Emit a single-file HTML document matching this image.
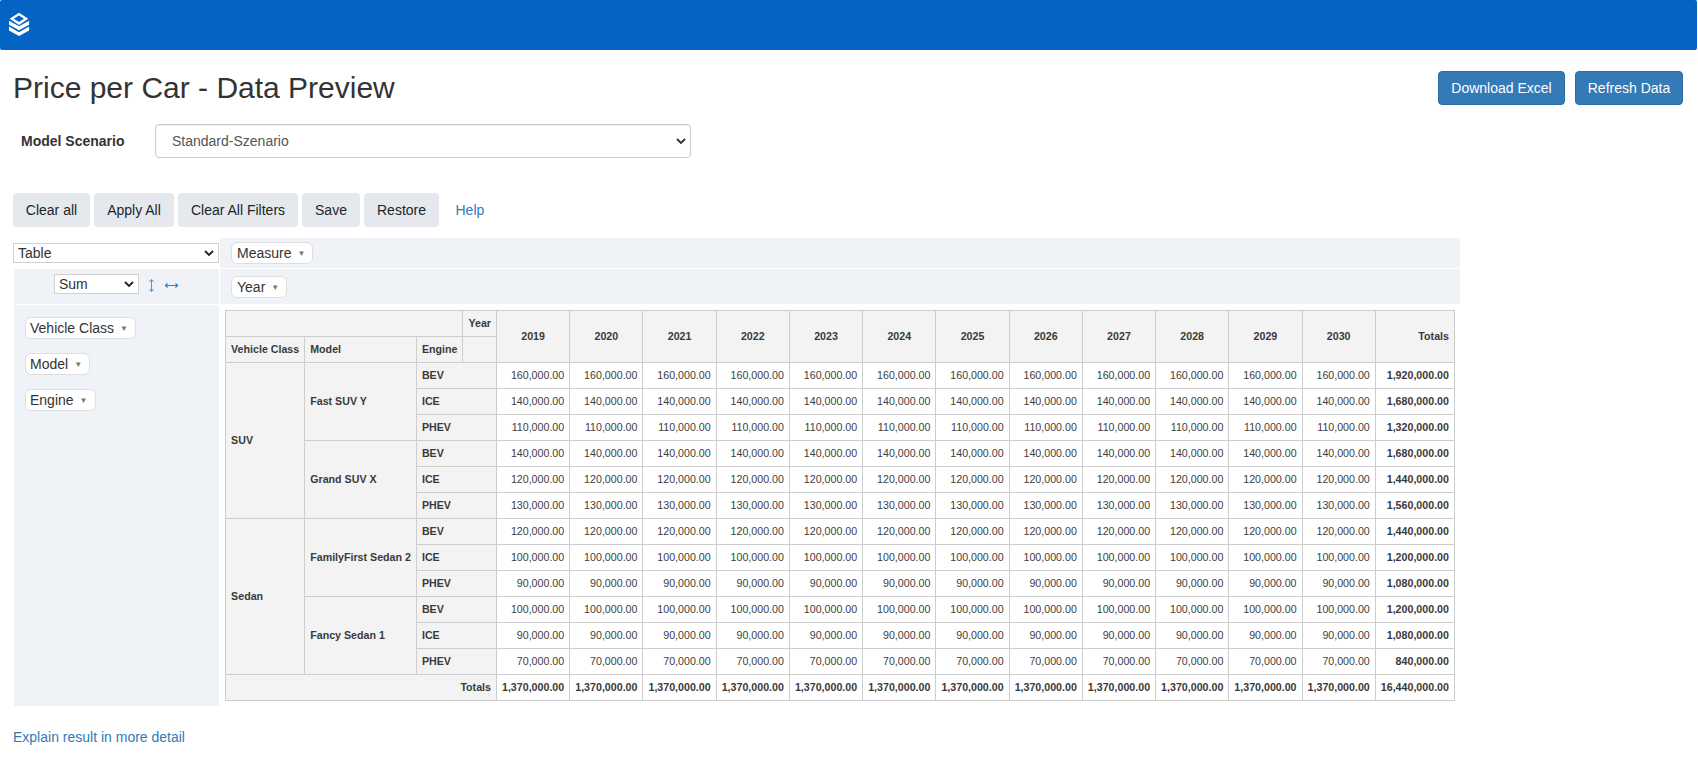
<!DOCTYPE html>
<html><head><meta charset="utf-8"><title>Price per Car - Data Preview</title>
<style>
html,body{margin:0;padding:0;background:#fff;}
body{width:1698px;height:766px;overflow:hidden;position:relative;font-family:"Liberation Sans",sans-serif;font-size:14px;color:#333;}
*{box-sizing:border-box;}
.abs{position:absolute;}
#hdr{position:absolute;left:0;top:0;width:1697px;height:50px;background:#0464c4;border-radius:2px;}
#logo{position:absolute;left:0;top:0;}
#title{position:absolute;left:13px;top:71px;font-size:30px;line-height:34px;font-weight:normal;color:#333;margin:0;white-space:nowrap;}
.btnp{position:absolute;top:71px;height:34px;background:#337ab7;border:1px solid #2e6da4;border-radius:4px;color:#fff;font-size:14px;line-height:20px;padding:6px 0;text-align:center;white-space:nowrap;}
#lbl{position:absolute;left:21px;top:131px;font-weight:bold;font-size:14px;line-height:20px;white-space:nowrap;}
#scen{position:absolute;left:155px;top:124px;width:536px;height:34px;border:1px solid #ccc;border-radius:4px;background:#fff;color:#555;font-size:14px;line-height:20px;padding:6px 16px;box-shadow:inset 0 1px 1px rgba(0,0,0,.075);}
.chev{position:absolute;}
.btng{position:absolute;top:193px;height:34px;background:#e5e9ee;border-radius:4px;color:#212529;font-size:14px;line-height:20px;padding:7px 0;text-align:center;white-space:nowrap;}
#help{position:absolute;left:455.5px;top:200px;color:#337ab7;font-size:14px;line-height:20px;}
.band{position:absolute;background:#eff2f7;}
.sel{position:absolute;background:#fff;border:1px solid #d0d0d0;color:#333;font-size:14px;white-space:nowrap;}
.pill{position:absolute;background:#fff;border:1px solid #dedede;border-radius:6px;color:#333;font-size:14px;line-height:20px;height:22px;padding:0 7px 0 4px;white-space:nowrap;}
.pill i{font-style:normal;font-size:8px;color:#777;margin-left:6px;position:relative;top:-2px;}
.arr{position:absolute;color:#337ab7;font-size:14px;line-height:20px;}
#out{position:absolute;left:225.1px;top:310px;}
table.pvt{border-collapse:collapse;font-size:10.67px;font-family:"Liberation Sans",sans-serif;color:#3a3a3a;}
table.pvt th{background:#f3f3f3;border:1px solid #cdcdcd;padding:5px;font-weight:bold;text-align:left;white-space:nowrap;height:26px;line-height:15px;}
table.pvt td{background:#fff;border:1px solid #cdcdcd;padding:5px;text-align:right;color:#3d3d3d;white-space:nowrap;height:26px;line-height:15px;vertical-align:top;}
table.pvt th.cl{text-align:center;}
table.pvt th.tl{text-align:right;}
table.pvt td.tot{font-weight:bold;color:#3a3a3a;}
#expl{position:absolute;left:13px;top:727px;color:#337ab7;font-size:14px;line-height:20px;white-space:nowrap;}

</style></head>
<body>
<div id="hdr">
<svg id="logo" width="40" height="50" viewBox="0 0 40 50"><path fill="#fff" fill-rule="evenodd" d="M19 12.7 L28.3 18.85 L19 25 L9.7 18.85 Z M18.9 15.6 L24 18.87 L18.9 22.1 L13.7 18.87 Z"/><path fill="#fff" d="M9 20.75 L19.05 26.3 L29.1 20.75 L29.1 24.7 L19.05 30.2 L9 24.7 Z"/><path fill="#fff" d="M9 26.6 L19.05 32.15 L29.1 26.6 L29.1 30.5 L19.05 36.05 L9 30.5 Z"/></svg>
</div>
<h2 id="title">Price per Car - Data Preview</h2>
<div class="btnp" style="left:1438px;width:127px;">Download Excel</div>
<div class="btnp" style="left:1575px;width:108px;">Refresh Data</div>
<div id="lbl">Model Scenario</div>
<div id="scen">Standard-Szenario<svg class="chev" style="right:4px;top:11px" width="10" height="10" viewBox="0 0 10 10"><path d="M1 3 L5 7 L9 3" fill="none" stroke="#333" stroke-width="1.8"/></svg></div>
<div class="btng" style="left:13px;width:77px;">Clear all</div>
<div class="btng" style="left:94px;width:80px;">Apply All</div>
<div class="btng" style="left:178px;width:120px;">Clear All Filters</div>
<div class="btng" style="left:302px;width:58px;">Save</div>
<div class="btng" style="left:364px;width:75px;">Restore</div>
<div id="help">Help</div>
<div class="band" style="left:220px;top:238px;width:1240px;height:30px;"></div>
<div class="band" style="left:220px;top:269px;width:1240px;height:35px;"></div>
<div class="band" style="left:14px;top:269px;width:205px;height:35px;"></div>
<div class="band" style="left:14px;top:305px;width:205px;height:401px;"></div>
<div class="sel" style="left:13px;top:243px;width:206px;height:20px;line-height:18px;padding-left:4px;">Table<svg class="chev" style="right:4px;top:4px" width="10" height="10" viewBox="0 0 10 10"><path d="M1 3 L5 7 L9 3" fill="none" stroke="#222" stroke-width="1.8"/></svg></div>
<div class="sel" style="left:54px;top:274px;width:85px;height:20px;line-height:18px;padding-left:4px;">Sum<svg class="chev" style="right:4px;top:4px" width="10" height="10" viewBox="0 0 10 10"><path d="M1 3 L5 7 L9 3" fill="none" stroke="#222" stroke-width="1.8"/></svg></div>
<svg class="abs" style="left:140px;top:270px" width="50" height="32" viewBox="140 270 50 32"><g fill="none" stroke="#4587c2" stroke-width="0.9"><path d="M151.5 279.6 V291.6 M149.3 282 L151.5 279.6 L153.7 282 M149.3 289.2 L151.5 291.6 L153.7 289.2"/></g><g fill="none" stroke="#337ab7" stroke-width="1.15"><path d="M165.4 285.5 H177.6 M167.6 283.4 L165.4 285.5 L167.6 287.6 M175.4 283.4 L177.6 285.5 L175.4 287.6"/></g></svg>
<div class="pill" style="left:231px;top:242px;padding-left:5px;">Measure<i>&#9660;</i></div>
<div class="pill" style="left:231px;top:276px;padding-left:5px;">Year<i>&#9660;</i></div>
<div class="pill" style="left:25px;top:317px;">Vehicle Class<i>&#9660;</i></div>
<div class="pill" style="left:25px;top:353px;">Model<i>&#9660;</i></div>
<div class="pill" style="left:25px;top:389px;">Engine<i>&#9660;</i></div>
<div id="out"><table class="pvt">
<colgroup><col class="c1"><col class="c2"><col class="c3"><col class="c4"><col class="cy"><col class="cy"><col class="cy"><col class="cy"><col class="cy"><col class="cy"><col class="cy"><col class="cy"><col class="cy"><col class="cy"><col class="cy"><col class="cy"><col class="ct"></colgroup>
<thead><tr class="h1"><th colspan="3" class="blank"></th><th class="axl">Year</th><th class="cl" rowspan="2">2019</th><th class="cl" rowspan="2">2020</th><th class="cl" rowspan="2">2021</th><th class="cl" rowspan="2">2022</th><th class="cl" rowspan="2">2023</th><th class="cl" rowspan="2">2024</th><th class="cl" rowspan="2">2025</th><th class="cl" rowspan="2">2026</th><th class="cl" rowspan="2">2027</th><th class="cl" rowspan="2">2028</th><th class="cl" rowspan="2">2029</th><th class="cl" rowspan="2">2030</th><th class="tl" rowspan="2">Totals</th></tr>
<tr class="h2"><th class="axl">Vehicle Class</th><th class="axl">Model</th><th class="axl">Engine</th><th class="blank"></th></tr></thead><tbody>
<tr><th class="rl" rowspan="6">SUV</th><th class="rl" rowspan="3">Fast SUV Y</th><th class="rl" colspan="2">BEV</th><td>160,000.00</td><td>160,000.00</td><td>160,000.00</td><td>160,000.00</td><td>160,000.00</td><td>160,000.00</td><td>160,000.00</td><td>160,000.00</td><td>160,000.00</td><td>160,000.00</td><td>160,000.00</td><td>160,000.00</td><td class="tot">1,920,000.00</td></tr>
<tr><th class="rl" colspan="2">ICE</th><td>140,000.00</td><td>140,000.00</td><td>140,000.00</td><td>140,000.00</td><td>140,000.00</td><td>140,000.00</td><td>140,000.00</td><td>140,000.00</td><td>140,000.00</td><td>140,000.00</td><td>140,000.00</td><td>140,000.00</td><td class="tot">1,680,000.00</td></tr>
<tr><th class="rl" colspan="2">PHEV</th><td>110,000.00</td><td>110,000.00</td><td>110,000.00</td><td>110,000.00</td><td>110,000.00</td><td>110,000.00</td><td>110,000.00</td><td>110,000.00</td><td>110,000.00</td><td>110,000.00</td><td>110,000.00</td><td>110,000.00</td><td class="tot">1,320,000.00</td></tr>
<tr><th class="rl" rowspan="3">Grand SUV X</th><th class="rl" colspan="2">BEV</th><td>140,000.00</td><td>140,000.00</td><td>140,000.00</td><td>140,000.00</td><td>140,000.00</td><td>140,000.00</td><td>140,000.00</td><td>140,000.00</td><td>140,000.00</td><td>140,000.00</td><td>140,000.00</td><td>140,000.00</td><td class="tot">1,680,000.00</td></tr>
<tr><th class="rl" colspan="2">ICE</th><td>120,000.00</td><td>120,000.00</td><td>120,000.00</td><td>120,000.00</td><td>120,000.00</td><td>120,000.00</td><td>120,000.00</td><td>120,000.00</td><td>120,000.00</td><td>120,000.00</td><td>120,000.00</td><td>120,000.00</td><td class="tot">1,440,000.00</td></tr>
<tr><th class="rl" colspan="2">PHEV</th><td>130,000.00</td><td>130,000.00</td><td>130,000.00</td><td>130,000.00</td><td>130,000.00</td><td>130,000.00</td><td>130,000.00</td><td>130,000.00</td><td>130,000.00</td><td>130,000.00</td><td>130,000.00</td><td>130,000.00</td><td class="tot">1,560,000.00</td></tr>
<tr><th class="rl" rowspan="6">Sedan</th><th class="rl" rowspan="3">FamilyFirst Sedan 2</th><th class="rl" colspan="2">BEV</th><td>120,000.00</td><td>120,000.00</td><td>120,000.00</td><td>120,000.00</td><td>120,000.00</td><td>120,000.00</td><td>120,000.00</td><td>120,000.00</td><td>120,000.00</td><td>120,000.00</td><td>120,000.00</td><td>120,000.00</td><td class="tot">1,440,000.00</td></tr>
<tr><th class="rl" colspan="2">ICE</th><td>100,000.00</td><td>100,000.00</td><td>100,000.00</td><td>100,000.00</td><td>100,000.00</td><td>100,000.00</td><td>100,000.00</td><td>100,000.00</td><td>100,000.00</td><td>100,000.00</td><td>100,000.00</td><td>100,000.00</td><td class="tot">1,200,000.00</td></tr>
<tr><th class="rl" colspan="2">PHEV</th><td>90,000.00</td><td>90,000.00</td><td>90,000.00</td><td>90,000.00</td><td>90,000.00</td><td>90,000.00</td><td>90,000.00</td><td>90,000.00</td><td>90,000.00</td><td>90,000.00</td><td>90,000.00</td><td>90,000.00</td><td class="tot">1,080,000.00</td></tr>
<tr><th class="rl" rowspan="3">Fancy Sedan 1</th><th class="rl" colspan="2">BEV</th><td>100,000.00</td><td>100,000.00</td><td>100,000.00</td><td>100,000.00</td><td>100,000.00</td><td>100,000.00</td><td>100,000.00</td><td>100,000.00</td><td>100,000.00</td><td>100,000.00</td><td>100,000.00</td><td>100,000.00</td><td class="tot">1,200,000.00</td></tr>
<tr><th class="rl" colspan="2">ICE</th><td>90,000.00</td><td>90,000.00</td><td>90,000.00</td><td>90,000.00</td><td>90,000.00</td><td>90,000.00</td><td>90,000.00</td><td>90,000.00</td><td>90,000.00</td><td>90,000.00</td><td>90,000.00</td><td>90,000.00</td><td class="tot">1,080,000.00</td></tr>
<tr><th class="rl" colspan="2">PHEV</th><td>70,000.00</td><td>70,000.00</td><td>70,000.00</td><td>70,000.00</td><td>70,000.00</td><td>70,000.00</td><td>70,000.00</td><td>70,000.00</td><td>70,000.00</td><td>70,000.00</td><td>70,000.00</td><td>70,000.00</td><td class="tot">840,000.00</td></tr>
<tr><th class="tl" colspan="4">Totals</th><td class="tot">1,370,000.00</td><td class="tot">1,370,000.00</td><td class="tot">1,370,000.00</td><td class="tot">1,370,000.00</td><td class="tot">1,370,000.00</td><td class="tot">1,370,000.00</td><td class="tot">1,370,000.00</td><td class="tot">1,370,000.00</td><td class="tot">1,370,000.00</td><td class="tot">1,370,000.00</td><td class="tot">1,370,000.00</td><td class="tot">1,370,000.00</td><td class="tot">16,440,000.00</td></tr>
</tbody></table></div>
<div id="expl">Explain result in more detail</div>
</body></html>
